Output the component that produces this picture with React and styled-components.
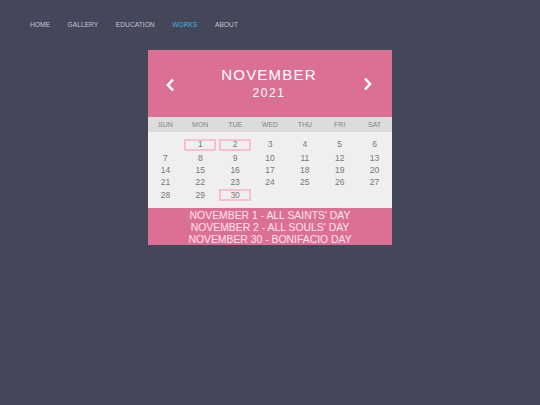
import styled, { createGlobalStyle } from "styled-components";

const Global = createGlobalStyle`
  html, body {
    margin: 0;
    padding: 0;
    background: #434759;
  }
  body {
    font-family: "Liberation Sans", Arial, sans-serif;
  }
`;

const Page = styled.div`
  min-height: 405px;
  background: #434759;
  padding-top: 20px;
  box-sizing: border-box;
`;

const Nav = styled.nav`
  display: flex;
  gap: 17.5px;
  padding: 0 30px;
  height: 10px;
  align-items: center;
`;

const NavLink = styled.a`
  font-size: 6.7px;
  line-height: 10px;
  color: ${(p) => (p.$active ? "#3cb3da" : "#c4c6ce")};
  text-decoration: none;
`;

const Card = styled.div`
  width: 244px;
  margin: 20px auto 0;
`;

const Header = styled.div`
  height: 67px;
  background: #dc7094;
  display: flex;
  align-items: center;
  justify-content: space-between;
  padding: 0 20px 0 18px;
  box-sizing: border-box;
`;

const Arrow = styled.svg`
  width: 9px;
  height: 14px;
  margin-top: ${(p) => p.$dy || 0}px;
`;

const Title = styled.div`
  display: flex;
  flex-direction: column;
  align-items: center;
  color: #fff;
`;

const Month = styled.div`
  font-size: 15px;
  line-height: 18px;
  letter-spacing: 1.2px;
`;

const Year = styled.div`
  font-size: 12px;
  line-height: 18px;
  letter-spacing: 1.6px;
`;

const Weekdays = styled.div`
  display: grid;
  grid-template-columns: repeat(7, 1fr);
  height: 15px;
  align-items: center;
  background: #dcdcdc;
`;

const Weekday = styled.div`
  text-align: center;
  font-size: 7px;
  color: #858585;
`;

const Days = styled.div`
  display: grid;
  grid-template-columns: repeat(7, 1fr);
  grid-template-rows: 15px 12px 12px 12px 14px;
  align-items: center;
  justify-items: center;
  background: #efefef;
  padding: 5px 0 6px;
`;

const Day = styled.div`
  font-size: 8.5px;
  line-height: 9px;
  color: #777;
  text-align: center;
  box-sizing: border-box;
  ${(p) =>
    p.$mark &&
    `
    width: 32px;
    height: 12px;
    border: 2px solid #f7bfd0;
    display: flex;
    align-items: center;
    justify-content: center;
  `}
`;

const Footer = styled.div`
  background: #dc7094;
  padding: 2px 0 0;
  height: 37px;
  box-sizing: border-box;
  text-align: center;
`;

const Holiday = styled.div`
  font-size: 10.4px;
  line-height: 12px;
  color: #fde6ee;
`;

const navItems = ["HOME", "GALLERY", "EDUCATION", "WORKS", "ABOUT"];
const weekdays = ["SUN", "MON", "TUE", "WED", "THU", "FRI", "SAT"];
const marked = [1, 2, 30];
const holidays = [
  "NOVEMBER 1 - ALL SAINTS' DAY",
  "NOVEMBER 2 - ALL SOULS' DAY",
  "NOVEMBER 30 - BONIFACIO DAY",
];

export default function App() {
  const cells = [null, ...Array.from({ length: 30 }, (_, i) => i + 1)];
  return (
    <Page>
      <Global />
      <Nav>
        {navItems.map((n) => (
          <NavLink key={n} $active={n === "WORKS"}>
            {n}
          </NavLink>
        ))}
      </Nav>
      <Card>
        <Header>
          <Arrow viewBox="0 0 9 14" $dy={2}>
            <polyline points="7,1.5 2,7 7,12.5" fill="none" stroke="#fff" strokeWidth="2.6" />
          </Arrow>
          <Title>
            <Month>NOVEMBER</Month>
            <Year>2021</Year>
          </Title>
          <Arrow viewBox="0 0 9 14" $dy={0}>
            <polyline points="2,1.5 7,7 2,12.5" fill="none" stroke="#fff" strokeWidth="2.6" />
          </Arrow>
        </Header>
        <Weekdays>
          {weekdays.map((d) => (
            <Weekday key={d}>{d}</Weekday>
          ))}
        </Weekdays>
        <Days>
          {cells.map((d, i) => (
            <Day key={i} $mark={marked.includes(d)}>
              {d}
            </Day>
          ))}
        </Days>
        <Footer>
          {holidays.map((h) => (
            <Holiday key={h}>{h}</Holiday>
          ))}
        </Footer>
      </Card>
    </Page>
  );
}
